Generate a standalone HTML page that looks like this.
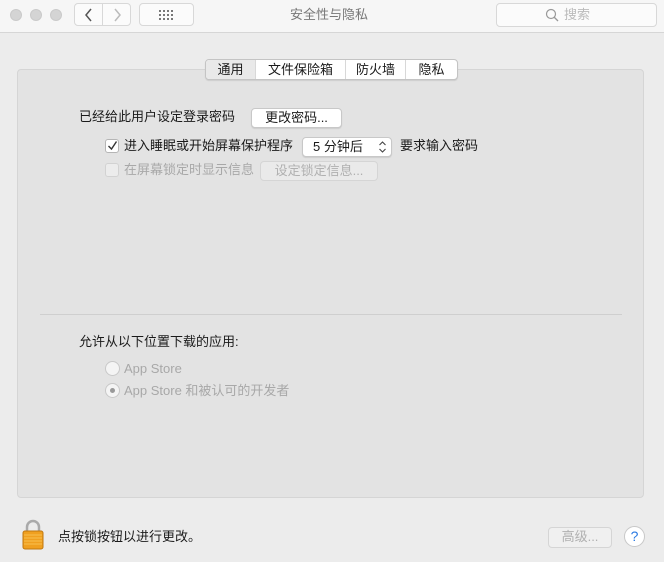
<!DOCTYPE html>
<html><head><meta charset="utf-8"><style>
*{margin:0;padding:0;box-sizing:border-box}
body{width:667px;height:562px;background:#fff;position:relative;overflow:hidden;font-family:"Liberation Sans","Noto Sans CJK SC",sans-serif;font-size:13px;color:#1a1a1a;line-height:16px}
.win{position:absolute;left:0;top:0;width:664px;height:562px;background:#ececec}
.title{position:absolute;left:0;top:0;width:664px;height:33px;background:#f6f6f6;border-bottom:1px solid #d6d6d6}
.dot{position:absolute;top:9px;width:12px;height:12px;border-radius:50%;background:#d4d4d4;border:1px solid #cacaca}
.btn{position:absolute;background:#fbfbfb;border:1px solid #d8d8d8;border-radius:4px}
.a{position:absolute;white-space:nowrap}
.panel{position:absolute;left:17px;top:69px;width:627px;height:429px;background:#e3e3e3;border:1px solid #d5d5d5;border-radius:4px}
.tabs{position:absolute;left:205px;top:59px;height:21px;display:flex;border:1px solid #c4c4c4;border-radius:4px;background:#fff;box-shadow:0 1px 1px rgba(0,0,0,.1);overflow:hidden}
.tabs div{text-align:center;line-height:19px;border-left:1px solid #d8d8d8}
.pb{position:absolute;background:#fff;border:1px solid #c8c8c8;border-radius:4px;box-shadow:0 1px 1px rgba(0,0,0,.1);text-align:center;line-height:18px}
.dis{color:#a8a8a8}
.cb{position:absolute;width:14px;height:14px;border:1px solid #b5b5b5;border-radius:3px;background:#fff}
.rd{position:absolute;width:15px;height:15px;border:1px solid #c8c8c8;border-radius:50%;background:#f4f4f4}
</style></head><body>
<div class="win">
<div class="title">
<div class="dot" style="left:10px"></div><div class="dot" style="left:30px"></div><div class="dot" style="left:50px"></div>
<div class="btn" style="left:74px;top:3px;width:29px;height:23px;border-radius:4px 0 0 4px"></div>
<div class="btn" style="left:102px;top:3px;width:29px;height:23px;border-radius:0 4px 4px 0"></div>
<svg class="a" style="left:82px;top:7px" width="14" height="16"><path d="M9 2 L4 8 L9 14" fill="none" stroke="#555" stroke-width="1.5"/></svg>
<svg class="a" style="left:110px;top:7px" width="14" height="16"><path d="M5 2 L10 8 L5 14" fill="none" stroke="#bbb" stroke-width="1.5"/></svg>
<div class="btn" style="left:139px;top:3px;width:55px;height:23px"></div>
<svg class="a" style="left:159px;top:10px" width="14" height="10" fill="#777"><rect x="0" y="0" width="2" height="2"/><rect x="4" y="0" width="2" height="2"/><rect x="8" y="0" width="2" height="2"/><rect x="12" y="0" width="2" height="2"/><rect x="0" y="4" width="2" height="2"/><rect x="4" y="4" width="2" height="2"/><rect x="8" y="4" width="2" height="2"/><rect x="12" y="4" width="2" height="2"/><rect x="0" y="8" width="2" height="2"/><rect x="4" y="8" width="2" height="2"/><rect x="8" y="8" width="2" height="2"/><rect x="12" y="8" width="2" height="2"/></svg>
<div class="a" style="left:290px;top:7px;color:#777;font-size:13px">安全性与隐私</div>
<div class="btn" style="left:496px;top:3px;width:161px;height:24px"></div>
<svg class="a" style="left:545px;top:8px" width="14" height="14"><circle cx="6" cy="6" r="4.5" fill="none" stroke="#999" stroke-width="1.2"/><path d="M9 9 L13 13" stroke="#999" stroke-width="1.3"/></svg>
<div class="a" style="left:564px;top:7px;color:#bbb">搜索</div>
</div>
<div class="panel"></div>
<div class="tabs"><div style="border-left:none;background:#e9e9e9;width:49px">通用</div><div style="width:90px">文件保险箱</div><div style="width:60px">防火墙</div><div style="width:52px">隐私</div></div>
<div class="a" style="left:79px;top:109px">已经给此用户设定登录密码</div>
<div class="pb" style="left:251px;top:108px;width:91px;height:20px">更改密码...</div>
<div class="cb" style="left:105px;top:139px"></div>
<svg class="a" style="left:106px;top:139px" width="13" height="13"><path d="M2.5 7 L5.5 10 L10.5 2.5" fill="none" stroke="#333" stroke-width="1.4"/></svg>
<div class="a" style="left:124px;top:138px">进入睡眠或开始屏幕保护程序</div>
<div class="pb" style="left:302px;top:137px;width:90px;height:20px;text-align:left;padding-left:10px">5 分钟后</div>
<svg class="a" style="left:378px;top:140px" width="9" height="14"><path d="M1.5 5 L4.5 2 L7.5 5 M1.5 9 L4.5 12 L7.5 9" fill="none" stroke="#444" stroke-width="1.1"/></svg>
<div class="a" style="left:400px;top:138px">要求输入密码</div>
<div class="cb" style="left:105px;top:163px;border-color:#d2d2d2;background:#ececec"></div>
<div class="a dis" style="left:124px;top:162px">在屏幕锁定时显示信息</div>
<div class="pb" style="left:260px;top:161px;width:118px;height:20px;color:#b0b0b0;background:#eaeaea;border-color:#d5d5d5;box-shadow:none">设定锁定信息...</div>
<div class="a" style="left:40px;top:314px;width:582px;height:1px;background:#cfcfcf"></div>
<div class="a" style="left:79px;top:334px">允许从以下位置下载的应用:</div>
<div class="rd" style="left:105px;top:361px"></div>
<div class="a dis" style="left:124px;top:361px">App Store</div>
<div class="rd" style="left:105px;top:383px"></div>
<div class="a" style="left:110px;top:388px;width:5px;height:5px;border-radius:50%;background:#999"></div>
<div class="a dis" style="left:124px;top:383px">App Store 和被认可的开发者</div>
<svg class="a" style="left:21px;top:518px" width="24" height="32"><path d="M6 14 V9 a6 6 0 0 1 12 0 V14" fill="none" stroke="#aaa" stroke-width="2.5"/><rect x="2" y="13" width="20" height="18" rx="2" fill="#f0a020" stroke="#c07810"/><path d="M3 17H21M3 20H21M3 23H21M3 26H21" stroke="#f8c050" stroke-width="1"/></svg>
<div class="a" style="left:58px;top:529px">点按锁按钮以进行更改。</div>
<div class="pb" style="left:548px;top:527px;width:64px;height:21px;color:#b0b0b0;background:#f0f0f0;border-color:#d5d5d5;box-shadow:none">高级...</div>
<div class="a" style="left:624px;top:526px;width:21px;height:21px;border-radius:50%;background:#fff;border:1px solid #c8c8c8;text-align:center;line-height:19px;color:#2a7ae2;font-size:14px">?</div>
</div>
</body></html>
